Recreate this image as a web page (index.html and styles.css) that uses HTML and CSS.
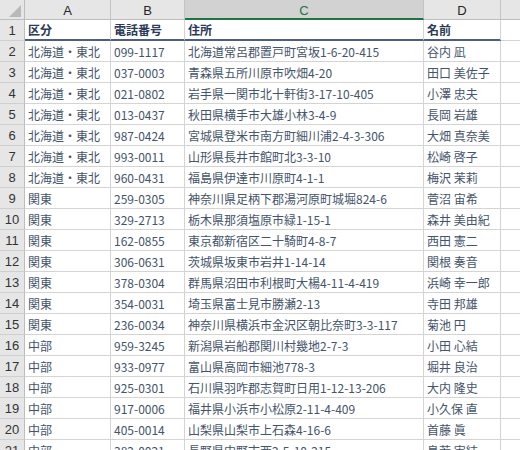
FILE: index.html
```html
<!DOCTYPE html>
<html lang="ja">
<head>
<meta charset="utf-8">
<link rel="stylesheet" href="styles.css">
</head>
<body>
<div class="sheet">
  <div class="corner"><svg width="24" height="19" viewBox="0 0 24 19"><polygon points="21,5 21,17 9,17" fill="#b9b9b9"/></svg></div>
  <div class="colhdr">A</div>
  <div class="colhdr">B</div>
  <div class="colhdr sel">C</div>
  <div class="colhdr">D</div>
  <div class="colhdr last"></div>

  <div class="rowhdr">1</div><div class="c h">区分</div><div class="c h">電話番号</div><div class="c h">住所</div><div class="c h">名前</div><div class="c e"></div>
  <div class="rowhdr">2</div><div class="c">北海道・東北</div><div class="c">099-1117</div><div class="c">北海道常呂郡置戸町宮坂1-6-20-415</div><div class="c">谷内 凪</div><div class="c e"></div>
  <div class="rowhdr">3</div><div class="c">北海道・東北</div><div class="c">037-0003</div><div class="c">青森県五所川原市吹畑4-20</div><div class="c">田口 美佐子</div><div class="c e"></div>
  <div class="rowhdr">4</div><div class="c">北海道・東北</div><div class="c">021-0802</div><div class="c">岩手県一関市北十軒街3-17-10-405</div><div class="c">小澤 忠夫</div><div class="c e"></div>
  <div class="rowhdr">5</div><div class="c">北海道・東北</div><div class="c">013-0437</div><div class="c">秋田県横手市大雄小林3-4-9</div><div class="c">長岡 岩雄</div><div class="c e"></div>
  <div class="rowhdr">6</div><div class="c">北海道・東北</div><div class="c">987-0424</div><div class="c">宮城県登米市南方町細川浦2-4-3-306</div><div class="c">大畑 真奈美</div><div class="c e"></div>
  <div class="rowhdr">7</div><div class="c">北海道・東北</div><div class="c">993-0011</div><div class="c">山形県長井市館町北3-3-10</div><div class="c">松崎 啓子</div><div class="c e"></div>
  <div class="rowhdr">8</div><div class="c">北海道・東北</div><div class="c">960-0431</div><div class="c">福島県伊達市川原町4-1-1</div><div class="c">梅沢 茉莉</div><div class="c e"></div>
  <div class="rowhdr">9</div><div class="c">関東</div><div class="c">259-0305</div><div class="c">神奈川県足柄下郡湯河原町城堀824-6</div><div class="c">菅沼 宙希</div><div class="c e"></div>
  <div class="rowhdr">10</div><div class="c">関東</div><div class="c">329-2713</div><div class="c">栃木県那須塩原市緑1-15-1</div><div class="c">森井 美由紀</div><div class="c e"></div>
  <div class="rowhdr">11</div><div class="c">関東</div><div class="c">162-0855</div><div class="c">東京都新宿区二十騎町4-8-7</div><div class="c">西田 憲二</div><div class="c e"></div>
  <div class="rowhdr">12</div><div class="c">関東</div><div class="c">306-0631</div><div class="c">茨城県坂東市岩井1-14-14</div><div class="c">関根 奏音</div><div class="c e"></div>
  <div class="rowhdr">13</div><div class="c">関東</div><div class="c">378-0304</div><div class="c">群馬県沼田市利根町大楊4-11-4-419</div><div class="c">浜崎 幸一郎</div><div class="c e"></div>
  <div class="rowhdr">14</div><div class="c">関東</div><div class="c">354-0031</div><div class="c">埼玉県富士見市勝瀬2-13</div><div class="c">寺田 邦雄</div><div class="c e"></div>
  <div class="rowhdr">15</div><div class="c">関東</div><div class="c">236-0034</div><div class="c">神奈川県横浜市金沢区朝比奈町3-3-117</div><div class="c">菊池 円</div><div class="c e"></div>
  <div class="rowhdr">16</div><div class="c">中部</div><div class="c">959-3245</div><div class="c">新潟県岩船郡関川村幾地2-7-3</div><div class="c">小田 心結</div><div class="c e"></div>
  <div class="rowhdr">17</div><div class="c">中部</div><div class="c">933-0977</div><div class="c">富山県高岡市細池778-3</div><div class="c">堀井 良治</div><div class="c e"></div>
  <div class="rowhdr">18</div><div class="c">中部</div><div class="c">925-0301</div><div class="c">石川県羽咋郡志賀町日用1-12-13-206</div><div class="c">大内 隆史</div><div class="c e"></div>
  <div class="rowhdr">19</div><div class="c">中部</div><div class="c">917-0006</div><div class="c">福井県小浜市小松原2-11-4-409</div><div class="c">小久保 直</div><div class="c e"></div>
  <div class="rowhdr">20</div><div class="c">中部</div><div class="c">405-0014</div><div class="c">山梨県山梨市上石森4-16-6</div><div class="c">首藤 眞</div><div class="c e"></div>
  <div class="rowhdr">21</div><div class="c">中部</div><div class="c">382-0021</div><div class="c">長野県中野市西2-5-10-215</div><div class="c">島若 実結</div><div class="c e"></div>
</div>
</body>
</html>
```

FILE: styles.css
```css
html, body {
  margin: 0;
  padding: 0;
  background: #ffffff;
  overflow: hidden;
  width: 520px;
  height: 450px;
}

.sheet {
  display: grid;
  grid-template-columns: 25px 86px 74px 239px 77px 40px;
  grid-template-rows: 20px;
  grid-auto-rows: 21px;
  font-family: "Noto Sans CJK JP", "Noto Sans", sans-serif;
  font-size: 12px;
}

.sheet > div {
  box-sizing: border-box;
  white-space: nowrap;
  overflow: hidden;
}

.corner {
  background: #e6e6e6;
  border-right: 1px solid #bdbdbd;
  border-bottom: 1px solid #bdbdbd;
}

.corner svg {
  display: block;
}

.colhdr {
  background: #e6e6e6;
  border-right: 1px solid #c4c4c4;
  border-bottom: 1px solid #bdbdbd;
  color: #262626;
  font-family: "Liberation Sans", "Noto Sans", sans-serif;
  font-size: 13px;
  display: flex;
  align-items: center;
  justify-content: center;
  padding-top: 1px;
}

.colhdr.sel {
  background: #d2d2d2;
  color: #217346;
  border-bottom: 2px solid #217346;
  padding-top: 2px;
}

.colhdr.last {
  border-right: none;
}

.rowhdr {
  background: #e6e6e6;
  border-right: 1px solid #bdbdbd;
  border-bottom: 1px solid #cfcfcf;
  color: #333333;
  font-family: "Liberation Sans", "Noto Sans", sans-serif;
  font-size: 13px;
  display: flex;
  align-items: center;
  justify-content: center;
  padding-top: 1px;
}

.c {
  border-right: 1px solid #d4d4d4;
  border-bottom: 1px solid #d4d4d4;
  color: #44546a;
  padding-left: 3px;
  display: flex;
  align-items: center;
  padding-top: 1px;
  line-height: 1;
}

.c.h {
  color: #2b3a55;
  font-weight: bold;
  border-bottom: 2px solid #4c5f7e;
}

.c.e {
  border-right: none;
}
```
